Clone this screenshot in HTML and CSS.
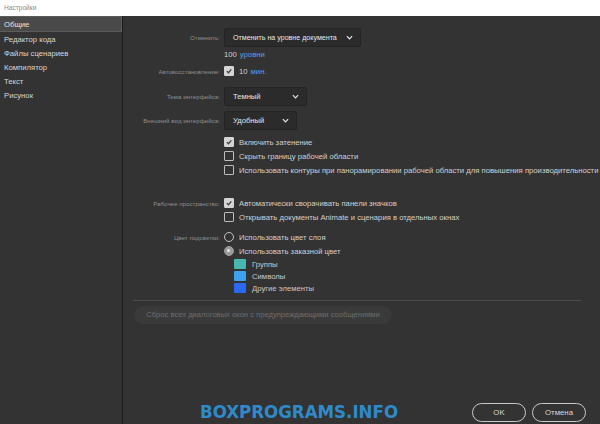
FILE: index.html
```html
<!DOCTYPE html>
<html lang="ru">
<head>
<meta charset="utf-8">
<title>Настройки</title>
<link rel="stylesheet" href="styles.css">
</head>
<body>
<div class="titlebar">Настройки</div>
<div class="window">
  <nav class="sidebar">
    <div class="nav-item active">Общие</div>
    <div class="nav-item">Редактор кода</div>
    <div class="nav-item">Файлы сценариев</div>
    <div class="nav-item">Компилятор</div>
    <div class="nav-item">Текст</div>
    <div class="nav-item">Рисунок</div>
  </nav>
  <main class="main">
    <div class="form">
      <div class="row row-undo">
        <div class="label">Отменить:</div>
        <div class="control"><div class="select w-undo"><span>Отменить на уровне документа</span><svg class="chev" viewBox="0 0 8 5"><path d="M1 1l3 3 3-3" fill="none" stroke="#e6e6e6" stroke-width="1.4"/></svg></div></div>
      </div>
      <div class="row row-levels">
        <div class="label"></div>
        <div class="control text"><span class="num">100</span> <span class="link">уровни</span></div>
      </div>
      <div class="row row-auto">
        <div class="label">Автовосстановление:</div>
        <div class="control text"><span class="cb checked"><svg viewBox="0 0 10 10"><path d="M2.3 5.2l2 2 3.6-4.2" fill="none" stroke="#3a3a3a" stroke-width="1.5"/></svg></span><span class="num">10</span> <span class="link">мин.</span></div>
      </div>
      <div class="row row-theme">
        <div class="label">Тема интерфейса:</div>
        <div class="control"><div class="select w-theme"><span>Темный</span><svg class="chev" viewBox="0 0 8 5"><path d="M1 1l3 3 3-3" fill="none" stroke="#e6e6e6" stroke-width="1.4"/></svg></div></div>
      </div>
      <div class="row row-view">
        <div class="label">Внешний вид интерфейса:</div>
        <div class="control"><div class="select w-view"><span>Удобный</span><svg class="chev" viewBox="0 0 8 5"><path d="M1 1l3 3 3-3" fill="none" stroke="#e6e6e6" stroke-width="1.4"/></svg></div></div>
      </div>
      <div class="group group-checks">
        <div class="row opt"><div class="label"></div><div class="control text"><span class="cb checked"><svg viewBox="0 0 10 10"><path d="M2.3 5.2l2 2 3.6-4.2" fill="none" stroke="#3a3a3a" stroke-width="1.5"/></svg></span>Включить затенение</div></div>
        <div class="row opt"><div class="label"></div><div class="control text"><span class="cb"></span>Скрыть границу рабочей области</div></div>
        <div class="row opt"><div class="label"></div><div class="control text"><span class="cb"></span>Использовать контуры при панорамировании рабочей области для повышения производительности</div></div>
      </div>
      <div class="group group-work">
        <div class="row opt"><div class="label">Рабочее пространство:</div><div class="control text"><span class="cb checked"><svg viewBox="0 0 10 10"><path d="M2.3 5.2l2 2 3.6-4.2" fill="none" stroke="#3a3a3a" stroke-width="1.5"/></svg></span>Автоматически сворачивать панели значков</div></div>
        <div class="row opt"><div class="label"></div><div class="control text"><span class="cb"></span>Открывать документы Animate и сценария в отдельных окнах</div></div>
      </div>
      <div class="group group-color">
        <div class="row opt"><div class="label">Цвет подсветки:</div><div class="control text"><span class="radio"></span>Использовать цвет слоя</div></div>
        <div class="row opt"><div class="label"></div><div class="control text"><span class="radio checked"></span>Использовать заказной цвет</div></div>
        <div class="swatches">
          <div class="swatch-row"><span class="swatch teal"></span>Группы</div>
          <div class="swatch-row"><span class="swatch sky"></span>Символы</div>
          <div class="swatch-row"><span class="swatch blue"></span>Другие элементы</div>
        </div>
      </div>
      <div class="separator"></div>
      <div class="reset">Сброс всех диалоговых окон с предупреждающими сообщениями</div>
    </div>
    <div class="footer">
      <button class="btn">OK</button>
      <button class="btn">Отмена</button>
    </div>
    <div class="watermark">BOXPROGRAMS.INFO</div>
  </main>
</div>
</body>
</html>
```
FILE: styles.css
```css
* { box-sizing: border-box; }
html, body { margin: 0; padding: 0; }
body {
  width: 600px;
  height: 424px;
  overflow: hidden;
  background: #333333;
  font-family: "Liberation Sans", Arial, sans-serif;
  color: #d2d2d2;
}
.titlebar {
  height: 16px;
  background: #ffffff;
  color: #8a8a8a;
  font-size: 6.6px;
  line-height: 15px;
  padding-left: 4px;
}
.window {
  display: flex;
  height: 408px;
}
.sidebar {
  width: 123px;
  flex: none;
  background: #333333;
  border-right: 1px solid #1c1c1c;
}
.nav-item {
  height: 14px;
  line-height: 14px;
  font-size: 7.7px;
  padding-left: 4px;
  color: #d6d6d6;
  white-space: nowrap;
}
.nav-item.active {
  height: 16px;
  line-height: 15px;
  background: #4a4a4a;
  border: 1px solid #5c5c5c;
  border-left: none;
  padding-left: 4px;
  margin-bottom: 1px;
  color: #e4e4e4;
}
.main {
  position: relative;
  flex: 1;
  min-width: 0;
  display: flex;
  flex-direction: column;
  background: #333333;
}
.form {
  padding: 12px 0 0 0;
  display: flex;
  flex-direction: column;
}
.row {
  display: grid;
  grid-template-columns: 97px minmax(0, 1fr);
  column-gap: 4px;
  align-items: center;
}
.label {
  text-align: right;
  font-size: 6.2px;
  color: #8e8e8e;
  white-space: nowrap;
}
.control { display: flex; align-items: center; min-width: 0; }
.text { font-size: 7.7px; color: #d0d0d0; white-space: nowrap; }
.select {
  height: 19px;
  display: flex;
  align-items: center;
  justify-content: space-between;
  background: #2b2b2b;
  border: 1px solid #242424;
  border-radius: 2px;
  padding: 0 7px 0 8px;
  font-size: 7.6px;
  color: #e6e6e6;
  white-space: nowrap;
}
.w-undo { font-size: 7.1px; }
.chev { width: 7px; height: 5px; flex: none; }
.w-undo { width: 137px; }
.w-theme { width: 83px; }
.w-view { width: 73px; }
.row-levels { height: 12px; margin-top: 1px; }
.num { margin-right: 3px; }
.link { color: #5b9ee6; }
.row-auto { height: 12px; margin-top: 5px; }
.row-theme { margin-top: 10px; }
.row-view { margin-top: 5px; }
.cb {
  width: 10px;
  height: 10px;
  border: 1px solid #bdbdbd;
  border-radius: 1px;
  margin-right: 5px;
  flex: none;
  display: inline-flex;
}
.cb svg { width: 100%; height: 100%; }
.cb.checked { background: #d4d4d4; border-color: #d4d4d4; }
.radio {
  width: 10px;
  height: 10px;
  border: 1.5px solid #c4c4c4;
  border-radius: 50%;
  margin-right: 5px;
  flex: none;
  position: relative;
}
.radio.checked { background: #9a9a9a; border-color: #9a9a9a; }
.radio.checked::after {
  content: "";
  position: absolute;
  left: 2px; top: 2px;
  width: 3px; height: 3px;
  border-radius: 50%;
  background: #e8e8e8;
}
.opt { height: 14px; }
.group-checks { margin-top: 5px; }
.group-work { margin-top: 19px; }
.group-color { margin-top: 6px; }
.swatches { padding-left: 111px; }
.swatch-row {
  height: 12px;
  display: flex;
  align-items: center;
  font-size: 7.7px;
  color: #c8c8c8;
}
.swatch {
  width: 12px;
  height: 10px;
  border-radius: 1px;
  margin-right: 6px;
}
.teal { background: #47b8b0; }
.sky { background: #3ea2f2; }
.blue { background: #2b68f5; }
.separator {
  margin: 6px 19px 0 10px;
  height: 1px;
  background: #4a4a4a;
}
.reset {
  margin: 5px 0 0 11px;
  width: 258px;
  height: 18px;
  border-radius: 9px;
  background: #3a3a3a;
  color: #6e6e6e;
  font-size: 7.6px;
  line-height: 18px;
  text-align: center;
  white-space: nowrap;
}
.footer {
  margin-top: auto;
  display: flex;
  justify-content: flex-end;
  gap: 6px;
  padding: 0 14px 2px 0;
}
.btn {
  width: 54px;
  height: 19px;
  border: 1.5px solid #c8c8c8;
  border-radius: 10px;
  background: transparent;
  color: #d8d8d8;
  font-family: inherit;
  font-size: 7.8px;
  padding: 0;
}
.watermark {
  position: absolute;
  left: 77px;
  bottom: 2px;
  color: #2f8acb;
  font-family: "DejaVu Sans Condensed", "DejaVu Sans", sans-serif;
  font-weight: bold;
  font-size: 18.5px;
  letter-spacing: 0px;
}
```
